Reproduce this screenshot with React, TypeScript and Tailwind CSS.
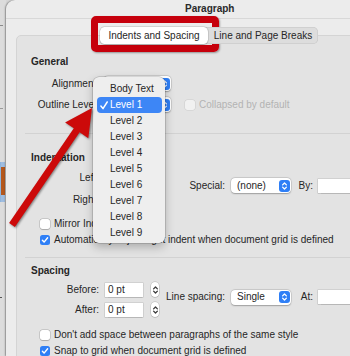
import React from "react";

const Chevrons = ({ color = "white" }: { color?: string }) => (
  <svg width="7" height="10" viewBox="0 0 7 10" fill="none" stroke={color} strokeWidth="1.3" strokeLinecap="round" strokeLinejoin="round">
    <path d="M1.6 3.9 L3.5 2 L5.4 3.9" />
    <path d="M1.6 6.1 L3.5 8 L5.4 6.1" />
  </svg>
);

function Popup({ text, wide }: { text?: string; wide?: boolean }) {
  return (
    <div
      className={
        (wide ? "w-[67px]" : "w-[60px]") +
        " h-[15px] shrink-0 bg-white rounded-[4px] shadow-[0_0_0_0.5px_rgba(0,0,0,0.14),0_0.5px_1.5px_rgba(0,0,0,0.25)] flex items-center pl-[6px] pr-[1.5px]"
      }
    >
      <span className="flex-1 text-[#262626]">{text}</span>
      <div className="w-[11px] h-[12px] rounded-[3px] bg-[#2f7ff6] flex items-center justify-center">
        <Chevrons />
      </div>
    </div>
  );
}

function Field({ text, wide }: { text?: string; wide?: boolean }) {
  return (
    <div
      className={
        (wide ? "w-[60px]" : "w-[38px]") +
        " h-[14px] shrink-0 bg-white shadow-[0_0_0_0.5px_rgba(0,0,0,0.16),0_0.5px_1px_rgba(0,0,0,0.12)] flex items-center pl-[3px] text-[#262626]"
      }
    >
      {text}
    </div>
  );
}

function Stepper() {
  return (
    <div className="ml-[8px] w-[8px] h-[15px] shrink-0 rounded-full bg-white shadow-[0_0_0_0.5px_rgba(0,0,0,0.2),0_0.5px_1px_rgba(0,0,0,0.15)] flex items-center justify-center">
      <Chevrons color="#3a3a3a" />
    </div>
  );
}

function Check({ checked, disabled }: { checked?: boolean; disabled?: boolean }) {
  if (checked) {
    return (
      <div className="w-[10px] h-[10px] shrink-0 rounded-[2.5px] bg-[#2f7ff6] flex items-center justify-center">
        <svg width="8" height="8" viewBox="0 0 8 8">
          <path d="M1.4 4.3 L3.1 6.1 L6.6 1.7" stroke="white" strokeWidth="1.4" fill="none" strokeLinecap="round" strokeLinejoin="round" />
        </svg>
      </div>
    );
  }
  return (
    <div
      className={
        "w-[10px] h-[10px] shrink-0 rounded-[2.5px] " +
        (disabled
          ? "bg-[#f1f1f1] shadow-[0_0_0_0.5px_rgba(0,0,0,0.1)]"
          : "bg-white shadow-[0_0_0_0.5px_rgba(0,0,0,0.22),0_0.5px_1px_rgba(0,0,0,0.15)]")
      }
    />
  );
}

function CheckRow({ checked, text, className }: { checked?: boolean; text: string; className: string }) {
  return (
    <div className={"h-[14px] flex items-center ml-[9px] gap-[4px] whitespace-nowrap " + className}>
      <Check checked={checked} />
      <span>{text}</span>
    </div>
  );
}

function LabelRow({ label, field, className }: { label: string; field?: string; className: string }) {
  return (
    <div className={"h-[15px] flex items-center " + className}>
      <div className="w-[68px] text-right whitespace-nowrap">{label}</div>
      <div className="ml-[6px]">
        <Field text={field} />
      </div>
      <Stepper />
    </div>
  );
}

function RightGroup({ label, value, label2 }: { label: string; value: string; label2: string }) {
  return (
    <div className="ml-[6px] flex items-center">
      <div className="w-[60px] text-right whitespace-nowrap">{label}</div>
      <div className="ml-[6px]">
        <Popup text={value} />
      </div>
      <div className="ml-[6px] w-[16px] text-right whitespace-nowrap">{label2}</div>
      <div className="ml-[5px]">
        <Field wide />
      </div>
    </div>
  );
}

const levels = ["Level 2", "Level 3", "Level 4", "Level 5", "Level 6", "Level 7", "Level 8", "Level 9"];

export default function App() {
  return (
    <div className="relative w-[350px] h-[356px] overflow-hidden flex bg-[#d6d6d6] font-['Liberation_Sans',Arial,sans-serif] text-[10px] leading-[12px] text-[#262626]">
      {/* desktop strip behind window */}
      <div className="w-[6px] shrink-0 flex flex-col bg-[#dcdcdc]">
        <div className="mt-[25px] h-[1px] w-[3px] bg-[#8a8a8a]" />
        <div className="mt-[82px] h-[1px] w-[3px] bg-[#9a9a9a]" />
        <div className="mt-[53px] h-[40px] w-[5px] flex">
          <div className="w-[1px] bg-[#8fb4dd]" />
          <div className="w-[4px] flex flex-col">
            <div className="h-[5px] bg-[#9fbde0]" />
            <div className="h-[28px] bg-[#b4581e]" />
            <div className="h-[7px] bg-[#9fbde0]" />
          </div>
        </div>
        <div className="mt-[95px] h-[1px] w-[2px] bg-[#555]" />
      </div>

      {/* window */}
      <div className="flex-1 min-w-0 bg-[#ececec] rounded-tl-[9px] shadow-[-0.5px_0_1.5px_rgba(0,0,0,0.35)] flex flex-col">
        <div className="h-[19px] shrink-0 border-b border-[#d8d8d8] flex items-center pl-[179px] font-bold text-[#2a2a2a] whitespace-nowrap">
          Paragraph
        </div>

        <div className="relative z-10 mt-[8px] ml-[94px] w-[218px] h-[17px] shrink-0 rounded-[5px] bg-[#dddddd] shadow-[inset_0_0_0_0.5px_rgba(0,0,0,0.12)] flex items-center">
          <div className="w-[108px] h-[17px] rounded-[4.5px] bg-white shadow-[0_0_0_0.5px_rgba(0,0,0,0.15),0_0.5px_1.5px_rgba(0,0,0,0.2)] flex items-center justify-center whitespace-nowrap">
            Indents and Spacing
          </div>
          <div className="w-[110px] flex items-center justify-center whitespace-nowrap">Line and Page Breaks</div>
        </div>

        <div className="-mt-[9px] ml-[10px] w-[400px] h-[340px] shrink-0 bg-[#e3e3e3] border border-[#d4d4d4] rounded-[5px] pl-[14px] flex flex-col">
          <div className="mt-[20px] h-[12px] font-bold">General</div>
          <div className="mt-[8px] h-[15px] flex items-center">
            <div className="w-[68px] text-right whitespace-nowrap">Alignment:</div>
            <div className="ml-[5px]">
              <Popup wide />
            </div>
          </div>
          <div className="mt-[6px] h-[15px] flex items-center">
            <div className="w-[68px] text-right whitespace-nowrap">Outline Level:</div>
            <div className="ml-[5px]">
              <Popup wide />
            </div>
            <div className="ml-[14px] flex items-center gap-[4px] whitespace-nowrap text-[#b3b3b3]">
              <Check disabled />
              <span>Collapsed by default</span>
            </div>
          </div>

          <div className="mt-[21px] -ml-[6px] h-[1px] bg-[#d2d2d2]" />

          <div className="mt-[18px] h-[12px] font-bold">Indentation</div>
          <div className="flex items-center">
            <div className="flex flex-col">
              <LabelRow label="Left:" className="mt-[6px]" />
              <LabelRow label="Right:" className="mt-[7px]" />
            </div>
            <RightGroup label="Special:" value="(none)" label2="By:" />
          </div>
          <CheckRow text="Mirror Indents" className="mt-[10px]" />
          <CheckRow checked text="Automatically adjust right indent when document grid is defined" className="mt-[2px]" />

          <div className="mt-[10px] -ml-[6px] h-[1px] bg-[#d2d2d2]" />

          <div className="mt-[7px] h-[12px] font-bold">Spacing</div>
          <div className="flex items-center">
            <div className="flex flex-col">
              <LabelRow label="Before:" field="0 pt" className="mt-[5px]" />
              <LabelRow label="After:" field="0 pt" className="mt-[5px]" />
            </div>
            <RightGroup label="Line spacing:" value="Single" label2="At:" />
          </div>
          <CheckRow text="Don't add space between paragraphs of the same style" className="mt-[11px]" />
          <CheckRow checked text="Snap to grid when document grid is defined" className="mt-[2px]" />
        </div>
      </div>

      {/* popup menu */}
      <div className="absolute left-[93px] top-[77px] w-[72px] h-[166px] rounded-[6px] bg-[#eeeeee] shadow-[0_0_0_0.5px_rgba(0,0,0,0.25),0_4px_10px_rgba(0,0,0,0.25)] pt-[4px] px-[4px] flex flex-col">
        <div className="h-[16px] flex items-center pl-[13px] whitespace-nowrap">Body Text</div>
        <div className="h-[16px] flex items-center rounded-[4px] bg-[#3d86f6] text-white whitespace-nowrap -mr-[1px]">
          <span className="w-[13px] pl-[3px] flex items-center">
            <svg width="8" height="9" viewBox="0 0 8 9">
              <path d="M0.9 5 L3 7.6 L7.2 1" stroke="white" strokeWidth="1.5" fill="none" strokeLinecap="round" strokeLinejoin="round" />
            </svg>
          </span>
          <span>Level 1</span>
        </div>
        {levels.map((l) => (
          <div key={l} className="h-[16px] flex items-center pl-[13px] whitespace-nowrap">
            {l}
          </div>
        ))}
      </div>

      {/* annotation: red box */}
      <div className="absolute left-[91px] top-[16px] w-[128px] h-[36px] rounded-[5px] border-[7px] border-[#c6000c] shadow-[1px_1px_2px_rgba(0,0,0,0.35)]" />

      {/* annotation: red arrow */}
      <svg className="absolute left-0 top-0 pointer-events-none drop-shadow-[1px_1px_1px_rgba(0,0,0,0.45)]" width="350" height="356" viewBox="0 0 350 356">
        <polygon
          points="92,108 88.3,138.2 79.6,132.3 14.9,227 9.1,223 73.8,128.3 65.1,122.4"
          fill="#cc0a0a"
        />
      </svg>
    </div>
  );
}
